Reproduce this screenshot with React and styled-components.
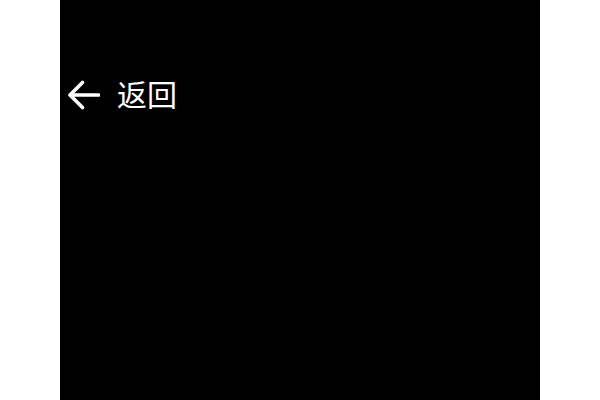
import React from "react";
import styled, { createGlobalStyle } from "styled-components";

const GlobalStyle = createGlobalStyle`
  html, body {
    margin: 0;
    padding: 0;
    background: #fff;
  }
`;

const Screen = styled.div`
  width: 480px;
  height: 400px;
  margin: 0 auto;
  background: #000;
  box-sizing: border-box;
  padding-top: 78px;
  font-family: "Noto Sans CJK SC", "Noto Sans", sans-serif;
`;

const TopBar = styled.div`
  display: flex;
  align-items: center;
  padding-left: 7px;
  height: 34px;
`;

const BackButton = styled.a.attrs({ href: "#" })`
  display: flex;
  align-items: center;
  gap: 17px;
  color: #fff;
  text-decoration: none;
  font-size: 30px;
  line-height: 34px;
  & > svg {
    display: block;
  }
`;

const Label = styled.span`
  display: block;
  margin-top: -4px;
`;

function BackArrow() {
  return (
    <svg width="33" height="32" viewBox="0 0 33 32" fill="none">
      <path
        d="M31.5 16H3 M15.5 3.5L3 16l12.5 12.5"
        stroke="#fff"
        strokeWidth="3.6"
        strokeLinecap="round"
        strokeLinejoin="round"
      />
    </svg>
  );
}

export default function App() {
  return (
    <>
      <GlobalStyle />
      <Screen>
        <TopBar>
          <BackButton>
            <BackArrow />
            <Label>返回</Label>
          </BackButton>
        </TopBar>
      </Screen>
    </>
  );
}
